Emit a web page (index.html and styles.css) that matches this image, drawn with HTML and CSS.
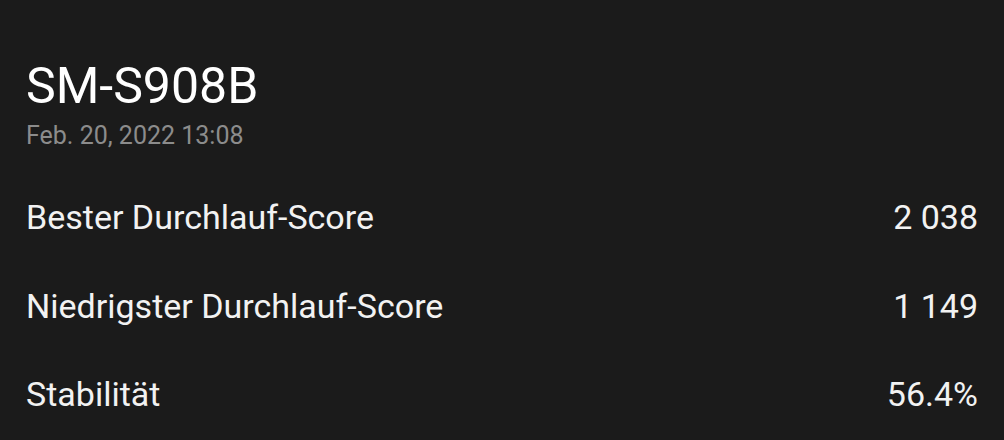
FILE: index.html
```html
<!DOCTYPE html>
<html lang="de">
<head>
    <meta charset="UTF-8">
    <meta name="viewport" content="width=device-width, initial-scale=1.0">
    <title>SM-S908B</title>
    <link rel="stylesheet" href="styles.css">
</head>
<body>
    <div class="container">
        <!-- Device header -->
        <div class="header">
            <h1>SM-S908B</h1>
            <div class="date">Feb. 20, 2022 13:08</div>
        </div>

        <!-- Score rows -->
        <div class="rows">
            <div class="row"><span>Bester Durchlauf-Score</span><span>2 038</span></div>
            <div class="row"><span>Niedrigster Durchlauf-Score</span><span>1 149</span></div>
            <div class="row"><span>Stabilität</span><span>56.4%</span></div>
        </div>
    </div>
</body>
</html>
```

FILE: styles.css
```css
/* Dark result card */
body {
    margin: 0;
    padding: 0;
    background-color: #1b1b1b;
    font-family: Roboto, "Noto Sans", sans-serif;
    color: #f2f2f2;
}
.container {
    padding: 56px 26px 0 26px;
}
h1 {
    margin: 0;
    font-size: 50px;
    font-weight: 400;
    line-height: 60px;
    color: #ffffff;
}
.date {
    margin-top: 5px;
    font-size: 25px;
    line-height: 30px;
    color: #8c8c8c;
}
.rows {
    margin-top: 22px;
}
.row {
    display: flex;
    justify-content: space-between;
    font-size: 34px;
    line-height: 88.5px;
}
```
